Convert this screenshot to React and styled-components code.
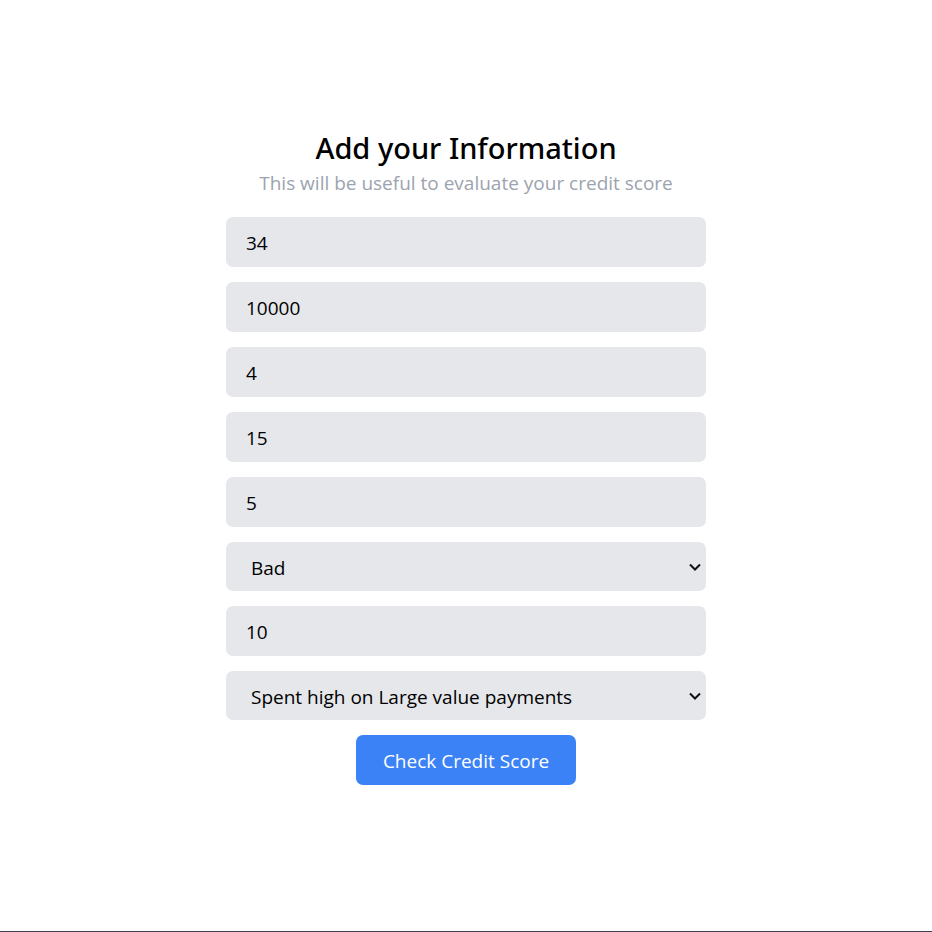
import React from "react";
import styled, { createGlobalStyle, css } from "styled-components";

const GlobalStyle = createGlobalStyle`
  *, *::before, *::after { box-sizing: border-box; }
  body { margin: 0; background: #fff; color: #000; }
  body, input, select, button { font-family: "Open Sans", "Noto Sans", sans-serif; }
`;

const Page = styled.main`
  min-height: 100vh;
  display: flex;
  flex-direction: column;
  align-items: center;
  justify-content: center;
  padding: 16px 16px 34px;
  border-bottom: 1px solid #423d50;
`;

const Form = styled.form`
  width: 100%;
  max-width: 480px;
  display: flex;
  flex-direction: column;
  align-items: center;
  gap: 15px;
`;

const Header = styled.header`
  text-align: center;
  margin-bottom: 4px;
`;

const Title = styled.h1`
  margin: 0;
  font-family: "Noto Sans", sans-serif;
  font-size: 29px;
  line-height: 40px;
  font-weight: 500;
`;

const Subtitle = styled.p`
  margin: 0;
  font-size: 19px;
  line-height: 30px;
  color: #9ca3af;
`;

const fieldStyle = css`
  display: block;
  width: 100%;
  border: 0;
  border-radius: 7px;
  background: #e5e7eb;
  color: #000;
  font-size: 19px;
  line-height: 30px;
`;

const Input = styled.input`
  ${fieldStyle}
  height: 50px;
  padding: 11px 20px 9px;
`;

const SelectBox = styled.div`
  width: 100%;
  display: grid;
  align-items: center;

  > * { grid-area: 1 / 1; }
`;

const Select = styled.select`
  ${fieldStyle}
  height: 49px;
  padding: 11px 25px 9px;
  appearance: none;
`;

const Chevron = styled.svg`
  justify-self: end;
  width: 14px;
  height: 10px;
  margin-right: 4px;
  pointer-events: none;
`;

const Submit = styled.button`
  width: 220px;
  height: 50px;
  padding: 11px 20px 9px;
  border: 0;
  border-radius: 7px;
  background: #3b82f6;
  color: #fff;
  font-size: 19px;
  line-height: 30px;
  cursor: pointer;
`;

function SelectField({ label, options }) {
  return (
    <SelectBox>
      <Select aria-label={label} defaultValue={options[0]}>
        {options.map((option) => <option key={option}>{option}</option>)}
      </Select>
      <Chevron viewBox="0 0 14 10" fill="none" stroke="#111" strokeWidth="2" aria-hidden="true">
        <path d="M2 2.5 7 7.5 12 2.5" />
      </Chevron>
    </SelectBox>
  );
}

export default function App() {
  return (
    <>
      <GlobalStyle />
      <Page>
        <Form onSubmit={(event) => event.preventDefault()}>
          <Header>
            <Title>Add your Information</Title>
            <Subtitle>This will be useful to evaluate your credit score</Subtitle>
          </Header>
          <Input aria-label="Age" defaultValue="34" />
          <Input aria-label="Annual income" defaultValue="10000" />
          <Input aria-label="Number of bank accounts" defaultValue="4" />
          <Input aria-label="Interest rate" defaultValue="15" />
          <Input aria-label="Number of loans" defaultValue="5" />
          <SelectField label="Credit mix" options={["Bad", "Standard", "Good"]} />
          <Input aria-label="Delayed payments" defaultValue="10" />
          <SelectField
            label="Payment behaviour"
            options={["Spent high on Large value payments", "Spent low on Small value payments"]}
          />
          <Submit type="submit">Check Credit Score</Submit>
        </Form>
      </Page>
    </>
  );
}
